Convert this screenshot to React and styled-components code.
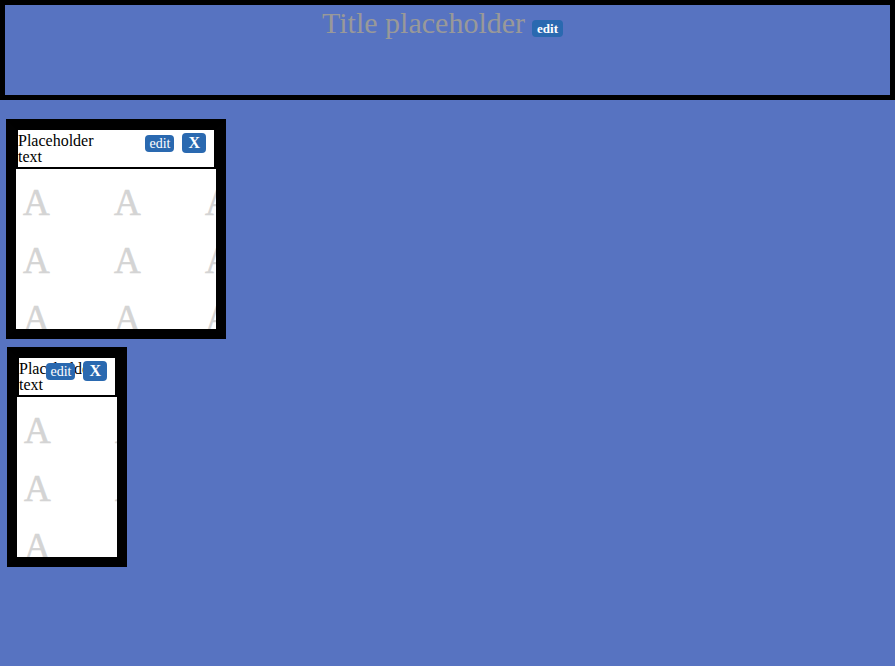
import React from 'react';
import styled, { createGlobalStyle } from 'styled-components';

const GlobalStyle = createGlobalStyle`
  body {
    margin: 0;
    background: #5773c1;
    font-family: "Liberation Serif", "Times New Roman", serif;
  }
`;

const Page = styled.div`
  display: flex;
  flex-direction: column;
  align-items: flex-start;
`;

const Banner = styled.header`
  box-sizing: border-box;
  width: 100%;
  height: 100px;
  border: 5px solid;
  border-color: #000 #010101 #000 #010101;
  text-align: center;
`;

const Title = styled.h1`
  margin: 0;
  padding: 1px 10px 0 0;
  font-size: 30px;
  font-weight: normal;
  color: #999;
`;

const Pill = styled.button`
  font-family: inherit;
  border: none;
  border-radius: 4px;
  background: #2a69b0;
  color: #fff;
  cursor: pointer;
  padding: 0 ${p => (p.$big ? '6px' : '4px')};
  height: ${p => (p.$big ? '20px' : '17px')};
  font-size: ${p => (p.$big ? '16px' : '14px')};
  font-weight: ${p => (p.$big ? 'bold' : 'normal')};
  line-height: ${p => (p.$big ? '20px' : '17px')};
`;

const TitlePill = styled(Pill)`
  vertical-align: 0;
  margin-left: 7px;
  padding: 0 5px;
  font-size: 13px;
  font-weight: bold;
`;

const Stack = styled.div`
  display: flex;
  flex-direction: column;
  gap: 8px;
  padding: 19px 0 0 6px;
`;

const Panel = styled.section`
  width: ${p => p.$w}px;
  height: 200px;
  border: 10px solid;
  border-color: #000 #010101 #000 #010101;
  background: #fff;
  display: flex;
  flex-direction: column;
  margin-left: ${p => p.$shift || 0}px;
`;

const PanelHead = styled.div`
  position: relative;
  box-sizing: border-box;
  height: 40px;
  border: 2px solid #000;
  border-top-width: 1px;
  padding: 3px 0 0 0;
  font-size: 16px;
  line-height: 16px;
  color: #000;
`;

const HeadText = styled.div`
  width: 50%;
`;

const HeadTools = styled.div`
  position: absolute;
  top: 3px;
  right: 8px;
  display: flex;
  align-items: center;
  gap: 8px;
`;

const Field = styled.div`
  flex: 1;
  overflow: hidden;
  display: grid;
  grid-auto-rows: 58px;
  padding: 16px 0 0 7px;
`;

const Letter = styled.span`
  font-size: 37px;
  line-height: 36px;
  font-weight: normal;
  color: #d4d4d4;
  -webkit-text-stroke: 0.6px #d4d4d4;
`;

function Card({ width, shift }) {
  const cols = Math.ceil(width / 91);
  const letters = Array.from({ length: cols * 4 }, (_, i) => i);
  return (
    <Panel $w={width} $shift={shift}>
      <PanelHead>
        <HeadText>Placeholder text</HeadText>
        <HeadTools>
          <Pill>edit</Pill>
          <Pill $big>X</Pill>
        </HeadTools>
      </PanelHead>
      <Field style={{ gridTemplateColumns: `repeat(${cols}, 91px)` }}>
        {letters.map(i => (
          <Letter key={i}>A</Letter>
        ))}
      </Field>
    </Panel>
  );
}

export default function App() {
  return (
    <Page>
      <GlobalStyle />
      <Banner>
        <Title>
          Title placeholder
          <TitlePill>edit</TitlePill>
        </Title>
      </Banner>
      <Stack>
        <Card width={200} />
        <Card width={100} shift={1} />
      </Stack>
    </Page>
  );
}
